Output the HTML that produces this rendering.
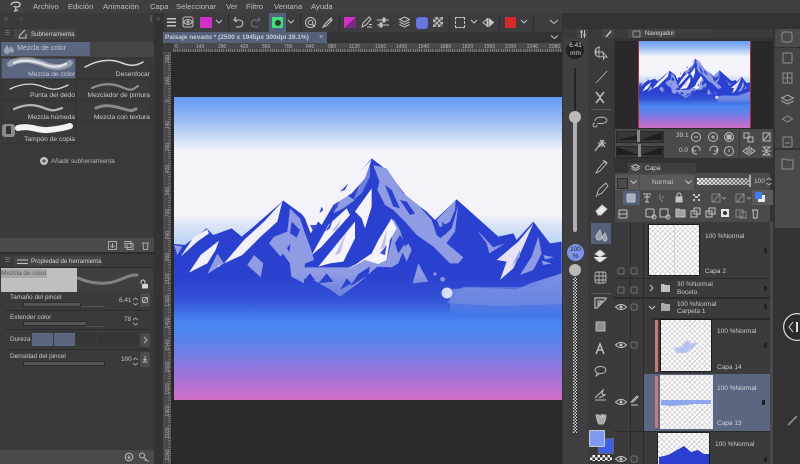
<!DOCTYPE html>
<html><head><meta charset="utf-8"><style>
html,body{margin:0;padding:0;background:#2b292c;width:800px;height:464px;overflow:hidden}
body{position:relative;font-family:"Liberation Sans",sans-serif;color:#c9c8ca;font-size:7.5px}
.a{position:absolute}
.t{position:absolute;white-space:nowrap;line-height:9px}
.m{position:absolute;top:1px;font-size:7.7px;line-height:11px;color:#bdbcbe}
.c{position:absolute;background:#3a393b;box-shadow:inset 0 0 0 .5px #2e2d2f}
.l{position:absolute;white-space:nowrap;line-height:9px;font-size:6.700px;text-align:right;left:0}
.p{font-size:6.400px}
.ch{background-color:#fff;background-image:conic-gradient(#d8d8da 25%,#fff 0 50%,#d8d8da 0 75%,#fff 0);background-size:5px 5px}
.r{position:absolute;font-size:5px;color:#b5b4b6;line-height:6px}
.v{position:absolute;left:164px;font-size:5px;color:#a9a8aa;line-height:6px;transform:rotate(-90deg);transform-origin:center;width:16px;margin-left:-4px;text-align:center}
svg.i{position:absolute;overflow:visible;fill:none;stroke:#c4c3c5;stroke-width:1}
.tr{position:absolute;height:5px;background:#555456;border:.5px solid #2d2c2e;box-sizing:border-box}
.sp{position:absolute;height:1px;background:#2c2b2d}
.b{position:absolute;background:#4c4b4d;border-radius:2px}
.ln{font-size:6.500px}
</style></head><body>
<svg width="0" height="0" style="position:absolute"><defs>
<filter id="soft" x="-2%" y="-2%" width="104%" height="104%"><feGaussianBlur stdDeviation="1.100"/></filter>
<linearGradient id="sky" x1="0" y1="97" x2="0" y2="400" gradientUnits="userSpaceOnUse">
<stop offset="0" stop-color="#639af5"/><stop offset=".07" stop-color="#93b8f5"/><stop offset=".13" stop-color="#c8d9f6"/><stop offset=".165" stop-color="#e5ebf9"/><stop offset=".17" stop-color="#f0f1fb"/><stop offset=".2" stop-color="#f5f4fb"/><stop offset=".39" stop-color="#f4f3fa"/><stop offset=".41" stop-color="#e2e8f8"/><stop offset=".49" stop-color="#b8d0f5"/><stop offset="1" stop-color="#4a80ee"/>
</linearGradient>
<linearGradient id="low" x1="0" y1="300" x2="0" y2="400" gradientUnits="userSpaceOnUse">
<stop offset="0" stop-color="#4379ea"/><stop offset=".28" stop-color="#4c86f1"/><stop offset=".5" stop-color="#6a80e9"/><stop offset=".75" stop-color="#a073d9"/><stop offset="1" stop-color="#d06fc7"/>
</linearGradient>
<linearGradient id="fog" x1="0" y1="274" x2="0" y2="322" gradientUnits="userSpaceOnUse">
<stop offset="0" stop-color="#3a5adb" stop-opacity="0"/><stop offset=".5" stop-color="#3c62dc" stop-opacity=".5"/><stop offset=".85" stop-color="#4379ea" stop-opacity=".95"/><stop offset="1" stop-color="#4983ef"/>
</linearGradient>
<symbol id="art" viewBox="174 97 388 303" preserveAspectRatio="none">
<rect x="174" y="97" width="388" height="303" fill="url(#sky)"/>
<rect x="174" y="300" width="388" height="100" fill="url(#low)"/>
<g transform="translate(170 140) scale(.33333)" filter="url(#soft)">
<path fill="#2a3fcf" d="M12 312L45 315 110 265 130 285 185 265 215 290 245 265 340 182 395 222 405 235 470 190 540 130 605 55 650 90 710 170 770 215 795 240 860 178 985 290 1030 280 1040 300 1090 245 1140 310 1175 305V540H12Z"/>
<g transform="translate(360 30)">
<g fill="#8f9be2">
<path d="M250 45L268 95 262 120 285 165 310 180 345 215 380 255 430 290 480 340 505 340 520 322 440 255 425 210 385 165 340 130 290 55Z"/>
<path d="M310 205L330 240 345 290 325 340 305 352 262 350 205 400 150 440 120 418 70 390 10 382 15 352 100 352 175 352 245 322 290 332 305 270Z"/>
<path d="M0 175L30 205 45 250 62 295 72 330 35 345 0 340 -30 300 -10 260Z"/>
<path d="M385 340L368 400 415 395Z"/><path d="M355 280L335 300 350 335 365 300Z"/>
<path d="M497 150L440 210 450 232 480 215 495 180Z"/><path d="M505 165L485 235 440 275 462 290 495 245Z"/>
<circle cx="435" cy="372" r="5"/><circle cx="458" cy="388" r="7"/>
<path d="M240 45L210 100 190 150 215 130 240 80Z" opacity=".7"/>
<path d="M160 130L195 150 160 175 130 190Z"/>
</g>
<g fill="#2a3fcf">
<path d="M285 105L310 170 330 175 305 120Z"/><path d="M330 150L360 195 375 190 350 155Z"/>
<path d="M5 215L30 240 20 262 0 250Z"/><path d="M10 290L40 300 20 325Z"/><path d="M330 255L345 280 325 310 315 280Z"/>
<path d="M240 350L205 372 180 410 235 375Z"/><path d="M110 370L85 400 130 395Z"/><path d="M455 215L480 235 465 255Z"/>
<path d="M-15 285L5 275 0 310Z"/><path d="M60 370L40 395 75 390Z"/><path d="M170 385L150 420 185 400Z"/>
</g>
<g fill="#f4f2fb">
<path d="M245 28L210 65 150 110 100 150 45 205 62 250 85 215 95 225 130 165 185 130 225 85Z"/>
<path d="M170 175L115 225 65 315 95 290 140 240 180 195Z"/>
<path d="M245 115L195 185 215 205 225 235 245 170Z"/>
<path d="M195 215L150 270 85 350 120 340 160 335 195 265Z"/>
<path d="M305 205L265 270 245 310 175 358 225 330 265 342 290 330 300 270 320 235Z"/>
</g>
<g fill="#3a4dd3">
<path d="M175 100L150 125 165 120Z"/><path d="M95 170L88 190 100 180Z"/><path d="M135 160L125 185 145 170Z"/><path d="M60 225L70 245 78 225Z"/>
<path d="M290 285L270 310 285 315Z"/><path d="M130 205L105 245 120 235Z"/>
</g>
<g fill="#b7b2e4" opacity=".8"><path d="M155 205L125 245 140 240Z"/><path d="M170 245L135 315 150 310Z"/><path d="M290 240L270 300 285 290Z"/></g>
</g>
<g transform="translate(12 180)">
<g fill="#8f9be2">
<path d="M240 165L220 195 260 232 268 190Z"/><path d="M130 160L100 222 150 190Z"/>
<path d="M300 110L285 130 320 170 350 130 340 95Z"/><path d="M350 120L345 170 352 230 390 250 395 140Z"/>
<path d="M0 135L10 165 25 140Z"/>
</g>
<g fill="#f2f0fb">
<path d="M100 88L60 110 20 170 70 125 105 100Z"/>
<path d="M135 122L80 165 45 218 100 190 125 150Z"/>
<path d="M325 5L270 65 210 120 150 190 205 165 260 110 310 65Z"/>
<path d="M130 200l10-8-4 8z"/>
</g>
</g>
<g transform="translate(840 180)">
<g fill="#8f9be2">
<path d="M265 110L245 170 210 225 250 210 275 160Z"/><path d="M80 90L110 130 118 160 165 130 130 142 105 115Z"/>
<path d="M280 165L312 172 285 178ZM275 182L305 190 280 195Z"/>
</g>
<path fill="#e6e2f5" d="M250 70L205 125 140 180 170 185 150 240 190 205 220 140Z"/>
<path fill="#8f9be2" d="M210 150L195 180 185 200 210 170Z"/>
<path fill="#7c92e4" d="M0 268L60 262 200 268 240 250 335 220V340H0Z"/>
</g>
</g>
<rect x="174" y="274" width="388" height="48" fill="url(#fog)"/>
<path fill="#7c92e4" opacity=".55" d="M446 303L463 287 537 287 562 275V304L500 306Z"/>
<circle cx="447" cy="293" r="5.500" fill="#d6ddf9"/>
</symbol>
</defs></svg>

<div class="a" style="left:0;top:0;width:800px;height:13px;background:#413f41"></div>
<div class="a" style="left:0;top:13px;width:800px;height:19px;background:#3b3a3c"></div>
<svg class="i" style="left:9px;top:0" width="14" height="13" viewBox="0 0 14 13"><path d="M2 5c0-3 8-4 9-1 1 3-5 4-6 2M7 8l-1 3 3-1" stroke-width="1.400"/></svg>
<span class="m" style="left:33px">Archivo</span><span class="m" style="left:68px">Edición</span><span class="m" style="left:103px">Animación</span><span class="m" style="left:150px">Capa</span><span class="m" style="left:176px">Seleccionar</span><span class="m" style="left:226px">Ver</span><span class="m" style="left:246px">Filtro</span><span class="m" style="left:274px">Ventana</span><span class="m" style="left:311px">Ayuda</span>

<div class="a" style="left:164px;top:13px;width:398px;height:19px;background:#3d3c3e"></div>
<div class="a" style="left:269px;top:13px;width:17px;height:19px;background:#55607a"></div>
<div class="a" style="left:167px;top:18px;width:9px;height:9px;background:repeating-linear-gradient(#c4c3c5 0 1.400px,transparent 1.400px 3.600px)"></div>
<svg class="i" style="left:182px;top:16px" width="12" height="12"><rect x="1" y="1" width="10" height="10" rx="2"/><ellipse cx="6" cy="6" rx="4" ry="2.400"/><circle cx="6" cy="6" r="1"/><circle cx="10.500" cy="1.500" r="1" fill="#e33" stroke="none"/></svg>
<div class="a" style="left:200px;top:17px;width:12px;height:11px;background:#d030c8"></div>
<svg class="i" style="left:215px;top:19px" width="8" height="6"><path d="M1 1l3 3 3-3"/></svg>
<svg class="i" style="left:233px;top:16px" width="11" height="12"><path d="M3 1L1 4l3 2M1 4h5c5 0 5 7 0 7H3" stroke-width="1.100"/></svg>
<svg class="i" style="left:250px;top:16px;opacity:.4" width="11" height="12"><path d="M8 1l2 3-3 2M10 4H5c-5 0-5 7 0 7h3"/></svg>
<div class="a" style="left:272px;top:17px;width:11px;height:11px;background:#3ee07c;border-radius:1px"></div>
<div class="a" style="left:274.500px;top:19.500px;width:6px;height:6px;background:#2d3a33;border-radius:50%"></div>
<svg class="i" style="left:287px;top:19px" width="8" height="6"><path d="M1 1l3 3 3-3"/></svg>
<svg class="i" style="left:305px;top:17px" width="11" height="11"><circle cx="5.500" cy="5.500" r="5"/><circle cx="5.500" cy="5.500" r="2.200"/><path d="M7 7l3 3"/></svg>
<svg class="i" style="left:322px;top:17px" width="11" height="11"><path d="M9 1L3 7 1 10l3-1 6-6zM7 2l2 2" stroke-width="1.100"/></svg>
<div class="a" style="left:344px;top:17px;width:12px;height:11px;background:linear-gradient(135deg,#d030c8 50%,#7a2a80 50%)"></div>
<svg class="i" style="left:361px;top:16px" width="12" height="12"><path d="M8 1L2 7 1 11l4-2 5-6zM6 11h5M8 8.500h3"/></svg>
<svg class="i" style="left:377px;top:18px" width="12" height="9"><path d="M0 2h12M0 7h12"/><rect x="6" y="0" width="2" height="4" fill="#c4c3c5"/><rect x="3" y="5" width="2" height="4" fill="#c4c3c5"/></svg>
<svg class="i" style="left:399px;top:16px" width="11" height="12"><path d="M5.500 1L10.500 3.500 5.500 6 .5 3.500ZM.5 6l5 2.500L10.500 6M.5 8.500l5 2.500 5-2.500"/></svg>
<div class="a" style="left:416px;top:17px;width:10px;height:10px;border:1.200px solid #5f6ff5;border-radius:3px;background:#6878d8"></div>
<div class="a" style="left:433px;top:17px;width:10px;height:10px;background:conic-gradient(#bbb 25%,#555 0 50%,#bbb 0 75%,#555 0);background-size:5px 5px"></div>
<div class="a" style="left:455px;top:17px;width:8px;height:9px;border:1px dashed #c4c3c5"></div>
<svg class="i" style="left:470px;top:19px" width="8" height="6"><path d="M1 1l3 3 3-3"/></svg>
<svg class="i" style="left:482px;top:18px" width="12" height="9"><path d="M5 1L1 4.500 5 8ZM6 0v9"/><path d="M7.500 1l4 3.500-4 3.500Z" fill="#c4c3c5"/></svg>
<div class="a" style="left:505px;top:17px;width:11px;height:11px;background:#d42a2a"></div>
<svg class="i" style="left:520px;top:19px" width="8" height="6"><path d="M1 1l3 3 3-3"/></svg>
<svg class="i" style="left:549px;top:19px" width="10" height="6"><path d="M1 1l4 3.500L9 1"/></svg>
<div class="a" style="left:228px;top:14px;width:1px;height:17px;background:#2f2e30"></div>
<div class="a" style="left:300px;top:14px;width:1px;height:17px;background:#2f2e30"></div>
<div class="a" style="left:339px;top:14px;width:1px;height:17px;background:#2f2e30"></div>
<div class="a" style="left:449px;top:14px;width:1px;height:17px;background:#2f2e30"></div>
<div class="a" style="left:499px;top:14px;width:1px;height:17px;background:#2f2e30"></div>
<div class="a" style="left:533px;top:14px;width:1px;height:17px;background:#2f2e30"></div>

<div class="a" style="left:0;top:13px;width:154px;height:451px;background:#3a393b"></div>
<div class="a" style="left:154px;top:13px;width:10px;height:451px;background:#333234"></div>
<div class="t" style="left:4px;top:14px;color:#6f6e70;font-size:8px">«</div><div class="t" style="left:20px;top:14px;color:#6f6e70;font-size:8px">‹</div>
<div class="t" style="left:156px;top:14px;color:#6f6e70;font-size:8px">»</div>
<div class="a" style="left:150px;top:15px;width:2px;height:7px;background:#555"></div>
<div class="a" style="left:14px;top:29px;width:62px;height:10px;background:#444345"></div>
<div class="a" style="left:5px;top:30px;width:5px;height:6px;background:repeating-linear-gradient(#666 0 1px,transparent 1px 2px)"></div>
<svg class="i" style="left:18px;top:30px" width="9" height="9"><path d="M7 0L2 5 1 8h7V4"/></svg>
<div class="t" style="left:31px;top:30px;font-size:6.100px;color:#d4d3d5">Subherramienta</div>
<div class="a" style="left:1px;top:42px;width:153px;height:15px;background:#454446"></div>
<div class="a" style="left:1px;top:42px;width:89px;height:14px;background:#5b6680"></div>
<svg class="a" style="left:3px;top:43px" width="12" height="12"><path d="M4 2C2 5 1 6 1 8a3 3 0 006 0C7 6 5 4 4 2ZM8 3c-1 2-2 3-1 5 0 1 1 2 2 2a2.500 2.500 0 002-3C11 6 9 5 8 3Z" fill="#9aa3b8"/></svg>
<div class="t" style="left:17px;top:44px;color:#c4c7d0;font-size:7px">Mezcla de color</div>

<div class="c" style="left:1px;top:58px;width:75px;height:21px;background:#5b6680"></div><div class="c" style="left:76px;top:58px;width:75px;height:21px"></div>
<div class="c" style="left:1px;top:79px;width:75px;height:21px"></div><div class="c" style="left:76px;top:79px;width:75px;height:21px"></div>
<div class="c" style="left:1px;top:101px;width:75px;height:21px"></div><div class="c" style="left:76px;top:101px;width:75px;height:21px"></div>
<div class="c" style="left:1px;top:123px;width:75px;height:21px"></div>
<svg class="a" style="left:0;top:55px" width="154" height="85" fill="none" stroke-linecap="round">
<path d="M10 9C24 1 38 7 46 10S64 13 70 8" stroke="#c9ccd6" stroke-width="6" opacity=".55"/>
<path d="M14 8C24 3 38 7 46 10S60 12 66 9" stroke="#e8e9ee" stroke-width="2.500" opacity=".9"/>
<path d="M85 12C100 4 112 4 122 8S138 10 143 7" stroke="#d8d8da" stroke-width="1.500"/>
<path d="M10 34C22 28 34 28 44 32S60 34 68 30" stroke="#d8d8da" stroke-width="1.300"/>
<path d="M92 33C105 27 115 29 124 33S134 33 138 31" stroke="#8e8d8f" stroke-width="2.200"/>
<path d="M14 54C26 49 34 49 44 53S56 55 62 53" stroke="#b5b4b6" stroke-width="2.300"/>
<path d="M96 53C105 49 114 51 124 54S132 55 136 54" stroke="#8a898b" stroke-width="3"/>
<path d="M18 73C30 70 38 76 48 75S64 73 70 71" stroke="#f2f2f3" stroke-width="6"/>
</svg>
<div class="a" style="left:2px;top:124px;width:13px;height:13px;background:#8c8b8d;border-radius:3px"></div>
<div class="a" style="left:6px;top:126px;width:5px;height:8px;background:#333;border-radius:2px 2px 0 0"></div>
<div class="l" style="width:75px;top:70px;color:#c4c7d0"><span style="background:#5b6680">Mezcla de color</span></div>
<div class="l" style="width:150px;top:70px">Desenfocar</div>
<div class="l" style="width:75px;top:91px">Punta del dedo</div>
<div class="l" style="width:150px;top:91px">Mezclador de pintura</div>
<div class="l" style="width:75px;top:113px">Mezcla húmeda</div>
<div class="l" style="width:150px;top:113px">Mezcla con textura</div>
<div class="l" style="width:75px;top:135px">Tampón de copia</div>
<svg class="i" style="left:40px;top:157px" width="8" height="8"><circle cx="4" cy="4" r="3.500" fill="#c4c3c5"/><path d="M4 2v4M2 4h4" stroke="#3a393b"/></svg>
<div class="t" style="left:51px;top:157px;font-size:6.300px;color:#b5b4b6">Añadir subherramienta</div>
<div class="a" style="left:0;top:238px;width:154px;height:14px;background:#4a494b"></div>
<svg class="i" style="left:108px;top:241px;stroke:#aaa" width="42" height="9"><rect x=".5" y=".5" width="8" height="8"/><path d="M4.500 2v4M2.500 4.500l2 2 2-2"/><rect x="17" y=".5" width="6" height="6"/><rect x="19" y="2.500" width="6" height="6"/><path d="M34 2h7M35 2l.5 6.500h4L40 2"/></svg>
<div class="a" style="left:0;top:252px;width:154px;height:2px;background:#2c2b2d"></div>
<div class="a" style="left:14px;top:256px;width:88px;height:10px;background:#444345"></div>
<div class="a" style="left:5px;top:257px;width:5px;height:6px;background:repeating-linear-gradient(#666 0 1px,transparent 1px 2px)"></div>
<svg class="i" style="left:17px;top:259px" width="11" height="6"><path d="M0 1h11M0 4.500h11"/></svg>
<div class="t" style="left:31px;top:257px;font-size:6.100px;color:#d4d3d5">Propiedad de herramienta</div>
<div class="a" style="left:0;top:267px;width:154px;height:1px;background:#2c2b2d"></div>
<div class="a" style="left:1px;top:268px;width:152px;height:24px;background:#3f3e40"></div>
<div class="a" style="left:1px;top:268px;width:76px;height:24px;background:#c0bfc0"></div>
<svg class="a" style="left:77px;top:268px" width="65" height="24" fill="none"><path d="M1 10C14 16 30 17 42 12S56 7 60 7" stroke="#a09fa1" stroke-width="3" stroke-linecap="round" opacity=".7"/></svg>
<div class="t" style="left:1px;top:269px;color:#5a595b;font-size:6.500px;background:#a8a7a9">Mezcla de color</div>
<svg class="i" style="left:140px;top:280px" width="8" height="9"><rect x="2" y="4" width="6" height="4.500" fill="#d5d4d6" stroke="none"/><path d="M1 4V2a2 2 0 014 0v2" stroke="#d5d4d6"/></svg>
<div class="t p" style="left:10px;top:293px">Tamaño del pincel</div>
<div class="tr" style="left:23px;top:302px;width:58px"></div><div class="sp" style="left:81px;top:306px;width:24px;background:#555456"></div>
<div class="t p" style="left:119px;top:296px">6.41</div>
<svg class="i" style="left:132px;top:297px;stroke:#a09fa1" width="7" height="9"><path d="M1 3l2.500-2L6 3M1 6l2.500 2L6 6"/></svg>
<div class="b" style="left:140px;top:293px;width:10px;height:14px"></div><svg class="i" style="left:142px;top:297px;stroke:#aaa" width="6" height="6"><rect x=".5" y=".5" width="5" height="5" rx="1"/><path d="M1 5l4-4"/></svg>
<div class="sp" style="left:5px;top:310px;width:144px"></div>
<div class="t p" style="left:10px;top:313px">Extender color</div>
<div class="tr" style="left:23px;top:321px;width:64px"></div><div class="sp" style="left:87px;top:326px;width:18px;background:#555456"></div>
<div class="t p" style="left:124px;top:315px">78</div>
<svg class="i" style="left:132px;top:317px;stroke:#a09fa1" width="7" height="9"><path d="M1 3l2.500-2L6 3M1 6l2.500 2L6 6"/></svg>
<div class="sp" style="left:5px;top:329px;width:144px"></div>
<div class="t p" style="left:10px;top:335px">Dureza</div>
<div class="a" style="left:32px;top:333px;width:21px;height:13px;background:#5b6680"></div><div class="a" style="left:54px;top:333px;width:21px;height:13px;background:#5b6680"></div>
<div class="a" style="left:76px;top:333px;width:20px;height:13px;background:#363537"></div><div class="a" style="left:98px;top:333px;width:20px;height:13px;background:#363537"></div><div class="a" style="left:119px;top:333px;width:20px;height:13px;background:#363537"></div>
<div class="b" style="left:140px;top:333px;width:10px;height:14px"></div><svg class="i" style="left:143px;top:336px;stroke:#bbb" width="5" height="8"><path d="M1 1l3 3-3 3"/></svg>
<div class="sp" style="left:5px;top:349px;width:144px"></div>
<div class="t p" style="left:10px;top:352px">Densidad del pincel</div>
<div class="tr" style="left:23px;top:361px;width:82px"></div>
<div class="t p" style="left:121px;top:355px">100</div>
<svg class="i" style="left:132px;top:357px;stroke:#a09fa1" width="7" height="9"><path d="M1 3l2.500-2L6 3M1 6l2.500 2L6 6"/></svg>
<div class="b" style="left:140px;top:352px;width:10px;height:15px"></div><svg class="i" style="left:142px;top:356px;stroke:#bbb" width="6" height="7"><path d="M3 0v4M1.500 3L3 4.500 4.500 3M.5 6h5"/></svg>
<div class="a" style="left:0;top:450px;width:154px;height:14px;background:#4a494b"></div>
<svg class="i" style="left:125px;top:452px;stroke:#bbb" width="26" height="10"><circle cx="4" cy="5" r="3.800"/><path d="M4 3v3M2.500 5L4 6.500 5.500 5"/><circle cx="17" cy="3.500" r="2.500"/><path d="M18.500 5.500l5 4M21 7.500l-1 1.500"/></svg>

<div class="a" style="left:163px;top:32px;width:399px;height:11px;background:#333234"></div>
<div class="a" style="left:163px;top:32px;width:164px;height:11px;background:#55607a"></div>
<div class="t" style="left:165px;top:33px;font-size:6.500px;font-weight:bold;color:#c7cad3">Paisaje nevado * (2500 x 1945px 300dpi 39.1%)</div>
<div class="t" style="left:319px;top:33px;font-size:7px;color:#c7cad3">×</div>
<svg class="i" style="left:550px;top:35px" width="9" height="5"><path d="M1 .5l3.500 3L8 .5"/></svg>
<div class="a" style="left:163px;top:43px;width:399px;height:9px;background:#4a494b"></div>
<div class="a" style="left:173px;top:49px;width:389px;height:3px;background:repeating-linear-gradient(90deg,#9a999b 0 .5px,transparent .5px 2.200px)"></div>
<div class="a" style="left:163px;top:52px;width:8px;height:412px;background:#4a494b"></div>
<div class="a" style="left:163px;top:43px;width:10px;height:9px;background:#3b3a3c"></div>
<div class="a" style="left:168px;top:53px;width:3px;height:411px;background:repeating-linear-gradient(#88878a 0 .5px,transparent .5px 2.200px)"></div>
<div class="r" style="left:175px;top:44px">0</div><div class="r" style="left:196px;top:44px">140</div><div class="r" style="left:218px;top:44px">280</div><div class="r" style="left:240px;top:44px">420</div><div class="r" style="left:262px;top:44px">560</div><div class="r" style="left:284px;top:44px">700</div><div class="r" style="left:306px;top:44px">840</div><div class="r" style="left:328px;top:44px">980</div><div class="r" style="left:349px;top:44px">1120</div><div class="r" style="left:375px;top:44px">1260</div><div class="r" style="left:396px;top:44px">1400</div><div class="r" style="left:418px;top:44px">1540</div><div class="r" style="left:440px;top:44px">1680</div><div class="r" style="left:462px;top:44px">1820</div><div class="r" style="left:484px;top:44px">1960</div><div class="r" style="left:505px;top:44px">2100</div><div class="r" style="left:527px;top:44px">2240</div><div class="r" style="left:549px;top:44px">2380</div>
<div class="v" style="top:56px">280</div><div class="v" style="top:78px">140</div><div class="v" style="top:98px">0</div><div class="v" style="top:122px">140</div><div class="v" style="top:144px">280</div><div class="v" style="top:166px">420</div><div class="v" style="top:188px">560</div><div class="v" style="top:210px">700</div><div class="v" style="top:232px">840</div><div class="v" style="top:254px">980</div><div class="v" style="top:276px">1120</div><div class="v" style="top:298px">1260</div><div class="v" style="top:320px">1400</div><div class="v" style="top:342px">1540</div><div class="v" style="top:364px">1680</div><div class="v" style="top:386px">1820</div><div class="v" style="top:408px">1960</div><div class="v" style="top:430px">2100</div><div class="v" style="top:452px">2240</div>

<svg class="a" style="left:174px;top:97px" width="388" height="303"><use href="#art" width="388" height="303"/></svg>

<div class="a" style="left:562px;top:13px;width:238px;height:451px;background:#333234"></div>
<div class="a" style="left:563px;top:38px;width:25px;height:426px;background:#3f3e40"></div>
<div class="a" style="left:566px;top:41px;width:18px;height:18px;border-radius:50%;background:#222123"></div>
<div class="t" style="left:563px;top:42px;width:25px;text-align:center;font-size:6.500px;line-height:8px;color:#d8d7d9">6.41<br>mm</div>
<div class="a" style="left:574px;top:68px;width:2px;height:50px;background:#242325"></div>
<div class="a" style="left:573px;top:117px;width:4px;height:115px;background:#b0afb1;border-radius:2px"></div>
<div class="a" style="left:569px;top:111px;width:12px;height:12px;border-radius:50%;background:#b9b8ba"></div>
<div class="a" style="left:566.500px;top:244px;width:17px;height:17px;border-radius:50%;background:#7b93ea"></div>
<div class="t" style="left:563px;top:246px;width:25px;text-align:center;font-size:6.500px;line-height:7px;color:#222">100<br>%</div>
<div class="a" style="left:569px;top:264px;width:12px;height:12px;border-radius:50%;background:#b9b8ba"></div>
<div class="a" style="left:573px;top:277px;width:4px;height:156px;background:repeating-conic-gradient(#d8d8d8 0 25%,#222 0 50%) 0 0/3px 3px"></div>
<div class="a" style="left:563px;top:29px;width:25px;height:9px;background:#3a393b"></div>
<div class="a" style="left:577px;top:29px;width:11px;height:9px;background:#444345"></div>
<svg class="i" style="left:580px;top:30px" width="6" height="8"><path d="M1.500 0v8M4.500 0v8M0 2h3M3 5h3"/></svg>

<div class="a" style="left:588px;top:38px;width:26px;height:426px;background:#3a393b"></div>
<div class="a" style="left:588px;top:29px;width:26px;height:9px;background:#3a393b"></div>
<div class="a" style="left:602px;top:29px;width:12px;height:9px;background:#444345"></div>
<svg class="i" style="left:605px;top:31px" width="7" height="7"><path d="M6 0L1 6" stroke-width="1.400"/></svg>
<div class="a" style="left:591px;top:223px;width:20px;height:21px;background:#55607a"></div>
<div class="a" style="left:591px;top:109px;width:20px;height:1px;background:#5a595b"></div>
<div class="a" style="left:591px;top:293px;width:20px;height:1px;background:#5a595b"></div>
<svg class="i" style="left:588px;top:38px;stroke:#bdbcbe;stroke-width:.9" width="26" height="400">
<path d="M12 9a5 5 0 103 9M8 10v8M7 14h8M11 9v10M15 14l4 5-2.500 0-1 2Z"/>
<path d="M8 45L19 33" stroke-width=".7"/>
<path d="M8 54l4 5 4-5M8 65l4-5 4 5" stroke-width="1.600"/>
<path d="M7 83c0-5 11-5 12-1 0 4-8 4-10 3M9 87a2 2 0 11-2-2"/>
<path d="M12 106l-5 7M14 102v7M10 105h8M12 102l5 7M16 102l-5 7" stroke-width="1.100"/>
<path d="M17 123l-7 8-2 4 4-2 7-8zM15 122l4 4"/>
<path d="M18 145l-7 6-2 5 1 1 4-2 6-7zM9 157l-1 2"/>
<path d="M8 173l6-6 5 4-6 6H10z" fill="#e8e7e9"/>
<path d="M12 192c-3 4-4 5-4 7a3 3 0 006 0c0-2-1-3-2-7zM17 195c-2 3-3 4-2 6 0 1 1 2 2 2a2.500 2.500 0 002-3z" fill="#98a0b5"/>
<path d="M7 216l5-4 5 4-5 3z M6 219c2 2 3 4 6 5 3-1 4-3 7-5" fill="#e8e7e9"/>
<rect x="7" y="234" width="11" height="11" rx="2"/><path d="M11 234v11M15 234v11M7 238h11M7 242h11"/>
<path d="M7 260h11v1L9 270H7zM10 263h4l-4 4z" stroke-width="1.200"/>
<path d="M8 284h9v9H8z" fill="#8f8e90"/>
<path d="M8 316l4-10 4 10M9.500 312h5" stroke-width="1.500"/>
<ellipse cx="12.500" cy="332" rx="5.500" ry="3.500"/><path d="M9 335l-1 3 3-2"/>
<path d="M7 362h11M7 360l8-8-1 4 3 1-6 3" stroke-width="1.100"/>
<path d="M8 377c1 4 1 7 3 9h4c2-2 3-5 3-9-1 0-1 2-2 2v-3l-1 3v-3l-1 3-1-3v3l-2-2z" fill="#aaa9ab"/>
</svg>
<div class="a" style="left:598px;top:438px;width:14px;height:14px;background:#3f5fe8;border:1px solid #666"></div>
<div class="a" style="left:589px;top:430px;width:14px;height:15px;background:#7f9af2;border:1.200px solid #c9c8ca;border-radius:1px"></div>
<div class="a" style="left:590px;top:455px;width:22px;height:6px;background:repeating-conic-gradient(#fff 0 25%,#333 0 50%) 0 0/5px 5px;border-radius:1px"></div>

<div class="a" style="left:614px;top:29px;width:159px;height:9px;background:#3a393b"></div>
<div class="a" style="left:628px;top:29px;width:48px;height:9px;background:#444345"></div>
<div class="a" style="left:677px;top:29px;width:35px;height:9px;background:#3e3d3f"></div>
<svg class="i" style="left:632px;top:30px;stroke:#9a999b" width="9" height="8"><rect x="1" y="1" width="7" height="6" rx="1"/></svg>
<div class="t" style="left:645px;top:30px;font-size:6px;color:#d4d3d5">Navegador</div>
<div class="a" style="left:615px;top:41px;width:158px;height:88px;background:#2a282b"></div>
<svg class="a" style="left:638px;top:41px" width="112" height="87"><use href="#art" width="112" height="87"/></svg>
<div class="a" style="left:637.500px;top:41px;width:.6px;height:87px;background:#a33"></div><div class="a" style="left:750px;top:41px;width:.6px;height:87px;background:#a33"></div>
<div class="a" style="left:615px;top:129px;width:158px;height:29px;background:#4a494b"></div>
<div class="a" style="left:616px;top:131px;width:46px;height:10px;background:#373638;border:.5px solid #2a292b"></div>
<div class="a" style="left:616px;top:146px;width:46px;height:10px;background:#373638;border:.5px solid #2a292b"></div>
<svg class="a" style="left:616px;top:131px" width="46" height="25"><path d="M1 9L22 4V9ZM46 1V9H24Z M1 24V16L12 20 22 24Z M46 24V16L24 24Z" fill="#1f1e20"/></svg>
<div class="a" style="left:636.500px;top:130px;width:3px;height:12px;background:#88878a"></div><div class="a" style="left:637.500px;top:144px;width:3px;height:13px;background:#88878a"></div>
<div class="t" style="left:676px;top:131px;font-size:6.500px">39.1</div><div class="t" style="left:679px;top:146px;font-size:6.500px">0.0</div>
<svg class="i" style="left:691px;top:132px;stroke:#bbb" width="78" height="24">
<circle cx="5" cy="5" r="4.500"/><path d="M3 5h4"/><circle cx="22" cy="5" r="4.500"/><path d="M20 5h4M22 3v4"/><circle cx="38" cy="5" r="4.500"/><rect x="36" y="3" width="4" height="4" fill="#bbb"/>
<rect x="53" y="1" width="5" height="5"/><rect x="57" y="5" width="5" height="5"/><rect x="72" y="1" width="7" height="8"/><path d="M73 8l5-6"/>
<path d="M9 19a4 4 0 10-3 3M2 16l0 3 3 0"/><path d="M19 19a4 4 0 113 3M26 16v3h-3"/><circle cx="38" cy="19" r="4.500"/><path d="M38 17v3"/>
<path d="M56 16l-4 3 4 3zM58 14v10M60 16l4 3-4 3z"/><path d="M72 15h7l-3.500 3zM72 23h7l-3.500-3zM71 19h9"/>
</svg>
<div class="a" style="left:739px;top:131px;width:1px;height:26px;background:#333234"></div>

<div class="a" style="left:614px;top:158px;width:159px;height:15px;background:#333234"></div>
<div class="a" style="left:628px;top:163px;width:34px;height:10px;background:#444345"></div><div class="a" style="left:662px;top:163px;width:34px;height:10px;background:#3e3d3f"></div>
<svg class="i" style="left:631px;top:164px;stroke:#bbb" width="9" height="8"><path d="M4.500 .5L8.500 2.500 4.500 4.500 .5 2.500ZM.5 4.500l4 2 4-2"/></svg>
<div class="t" style="left:645px;top:164px;font-size:6.500px;color:#d4d3d5">Capa</div>
<div class="a" style="left:615px;top:173px;width:155px;height:49px;background:#4a494b"></div>
<div class="a" style="left:615px;top:175px;width:24px;height:15px;background:#5a595b"></div>
<div class="a" style="left:617px;top:178px;width:9px;height:9px;border:1px solid #2e2d2f;background:#4a494b"></div>
<svg class="i" style="left:630px;top:180px" width="7" height="5"><path d="M.5 .5L3.500 3.500 6.500 .5"/></svg>
<div class="a" style="left:640px;top:175px;width:54px;height:15px;background:#5a595b"></div>
<div class="t" style="left:652px;top:178px;font-size:6.500px">Normal</div>
<svg class="i" style="left:685px;top:180px" width="7" height="5"><path d="M.5 .5L3.500 3.500 6.500 .5"/></svg>
<div class="a" style="left:697px;top:178px;width:54px;height:7px;background:linear-gradient(90deg,rgba(255,255,255,.95),#bdbcbe),repeating-conic-gradient(#888 0 25%,#eee 0 50%) 0 0/4px 4px;background-blend-mode:multiply"></div>
<div class="a" style="left:749px;top:175px;width:2px;height:12px;background:#aaa"></div>
<div class="t" style="left:754px;top:177px;font-size:6.500px">100</div>
<svg class="i" style="left:766px;top:177px;stroke:#aaa" width="6" height="9"><path d="M.5 3L3 1l2.500 2M.5 6L3 8l2.500-2"/></svg>
<div class="a" style="left:623px;top:191px;width:17px;height:14px;background:#55607a"></div>
<svg class="i" style="left:618px;top:191px;stroke:#c4c3c5" width="152" height="30">
<rect x="9" y="3" width="8" height="8" rx="1" fill="#a8adc0"/><path d="M25 3h8M29 3v8M26 6h6M27 11h4"/><path d="M42 3v5l3 3M46 5l-2 2" opacity=".5"/><rect x="58" y="6" width="6" height="5" fill="#c4c3c5"/><path d="M59 6V4a2 2 0 014 0v2"/><path d="M75 4h2M80 4h2M75 9h2M80 9h2M77 6h3" stroke-width="2"/>
<rect x="94" y="3" width="8" height="8" opacity=".5"/><path d="M95 11l7-8" opacity=".5"/><path d="M104 6l2 2 2-2" opacity=".6"/><rect x="118" y="3" width="8" height="8" opacity=".5"/><path d="M119 11l7-8" opacity=".5"/><path d="M129 6l2 2 2-2" opacity=".6"/>
<rect x="1" y="19" width="8" height="8" rx="1"/><path d="M1 23h8"/><rect x="28" y="18" width="8" height="8" rx="1"/><circle cx="36" cy="26" r="2"/><rect x="42" y="18" width="8" height="8"/><circle cx="50" cy="26" r="2"/><path d="M58 18h3l1 1h5v7h-9z" fill="#a09fa1"/><rect x="73" y="20" width="6" height="6"/><rect x="76" y="17" width="6" height="6"/><rect x="88" y="20" width="6" height="6"/><rect x="91" y="17" width="6" height="6"/><rect x="103" y="18" width="8" height="8" fill="#e6e5e7" stroke="none"/><circle cx="107" cy="22" r="2" fill="#333" stroke="none"/><rect x="118" y="19" width="7" height="7" opacity=".5"/><rect x="122" y="21" width="6" height="6" opacity=".5"/><path d="M134 19h6M135 19l.5 8h3.500l.5-8"/>
</svg>
<div class="a" style="left:752px;top:190px;width:21px;height:15px;background:#5a595b"></div>
<div class="a" style="left:758px;top:195px;width:7px;height:7px;background:#e8e7e9"></div><div class="a" style="left:755px;top:192px;width:7px;height:7px;background:#3f7df0"></div>

<div class="a" style="left:614px;top:222px;width:156px;height:242px;background:#3b3a3c"></div>
<div class="a" style="left:629.500px;top:222px;width:1px;height:242px;background:#2b2a2c"></div>
<div class="a" style="left:643px;top:222px;width:1px;height:242px;background:#2b2a2c"></div>
<div class="a" style="left:770px;top:222px;width:3px;height:242px;background:#4a494b"></div>
<div class="a" style="left:614px;top:278px;width:156px;height:1px;background:#2b2a2c"></div>
<div class="a" style="left:614px;top:297px;width:156px;height:1.500px;background:#2b2a2c"></div>
<div class="a" style="left:652px;top:318px;width:118px;height:1.500px;background:#2b2a2c"></div>
<div class="a" style="left:644px;top:374px;width:126px;height:57px;background:#5b6680"></div>
<div class="a" style="left:614px;top:430.500px;width:156px;height:1px;background:#2b2a2c"></div>

<div class="a ch" style="left:649px;top:225px;width:50px;height:50px;box-shadow:0 0 0 .7px #111"></div>
<div class="a" style="left:674px;top:225px;width:.7px;height:50px;background:#e4c8cf"></div>
<div class="t ln" style="left:705px;top:232px">100 %Normal</div><div class="t ln" style="left:705px;top:267px">Capa 2</div>
<div class="t ln" style="left:677px;top:280px">30 %Normal</div><div class="t ln" style="left:677px;top:288px">Boceto</div>
<div class="t ln" style="left:677px;top:300px">100 %Normal</div><div class="t ln" style="left:677px;top:307px">Carpeta 1</div>

<svg class="i" style="left:614px;top:222px;stroke:#6f6e70" width="156" height="240">
<rect x="4" y="46" width="6" height="6" rx="1"/><rect x="17" y="46" width="6" height="6" rx="1"/>
<rect x="4" y="65" width="6" height="6" rx="1"/><rect x="17" y="65" width="6" height="6" rx="1"/>
<path d="M36 63l3 3-3 3" stroke="#c4c3c5"/><path d="M47 62h3l1 1h5v7h-9z" fill="#c0bfc1" stroke="none"/>
<path d="M1.500 85q5.500-5 11 0q-5.500 5-11 0z" stroke="#c4c3c5"/><circle cx="7" cy="85" r="1.500" fill="#c4c3c5" stroke="none"/><rect x="17" y="82" width="6" height="6" rx="1"/>
<path d="M35 84l3 3 3-3" stroke="#c4c3c5"/><path d="M47 81h3l1 1h5v7h-9z" fill="#aaa" stroke="none"/>
<path d="M1.500 123q5.500-5 11 0q-5.500 5-11 0z" stroke="#c4c3c5"/><circle cx="7" cy="123" r="1.500" fill="#c4c3c5" stroke="none"/><rect x="17" y="120" width="6" height="6" rx="1"/>
<path d="M1.500 180q5.500-5 11 0q-5.500 5-11 0z" stroke="#c4c3c5"/><circle cx="7" cy="180" r="1.500" fill="#c4c3c5" stroke="none"/>
<path d="M18 179l5-5 1 1-5 5-2 0zM17 183h7" stroke="#c4c3c5"/>
<path d="M1.500 237q5.500-5 11 0q-5.500 5-11 0z" stroke="#c4c3c5"/><circle cx="7" cy="237" r="1.500" fill="#c4c3c5" stroke="none"/><rect x="17" y="234" width="6" height="6" rx="1"/>
</svg>
<div class="a" style="left:764px;top:248px;width:3px;height:5px;background:#222"></div><div class="a" style="left:764px;top:286px;width:3px;height:5px;background:#222"></div><div class="a" style="left:764px;top:304px;width:3px;height:5px;background:#222"></div><div class="a" style="left:764px;top:343px;width:3px;height:5px;background:#222"></div><div class="a" style="left:762px;top:400px;width:3px;height:5px;background:#222"></div><div class="a" style="left:764px;top:457px;width:3px;height:5px;background:#222"></div>

<div class="a" style="left:655px;top:320px;width:2.500px;height:52px;background:#c87878"></div>
<div class="a ch" style="left:661px;top:320px;width:50px;height:51px;box-shadow:0 0 0 .7px #111"></div>
<svg class="a" style="left:661px;top:320px" width="50" height="51"><path d="M13 28L20 27 26 20 30 24 37 22 32 28 25 33 16 33Z" fill="#a9b8f0" opacity=".8"/></svg>
<div class="t ln" style="left:717px;top:327px">100 %Normal</div><div class="t ln" style="left:717px;top:363px">Capa 14</div>
<div class="a" style="left:655px;top:376px;width:2.500px;height:52px;background:#c87878"></div>
<div class="a ch" style="left:660.500px;top:376px;width:51px;height:52px;box-shadow:0 0 0 1px #e8e8ea"></div>
<svg class="a" style="left:660px;top:376px" width="52" height="52"><path d="M1 24h50v4H34l-8 1-16 1-9-1z" fill="#8fa5ee"/></svg>
<div class="t ln" style="left:717px;top:384px;color:#d5d7de">100 %Normal</div><div class="t ln" style="left:717px;top:419px;color:#d5d7de">Capa 13</div>
<div class="a ch" style="left:658px;top:433px;width:51px;height:31px;box-shadow:0 0 0 .7px #111"></div>
<svg class="a" style="left:658px;top:433px" width="51" height="31"><path d="M1 24L10 22 19 17 26 13 33 19 40 17 46 21 51 21V31H1Z" fill="#2a3fcf"/></svg>
<div class="t ln" style="left:715px;top:440px">100 %Normal</div>

<div class="a" style="left:775px;top:29px;width:25px;height:18px;background:#4a494b;border-radius:2px"></div>
<div class="a" style="left:775px;top:48px;width:25px;height:42px;background:#444345;border-radius:2px"></div>
<div class="a" style="left:775px;top:90px;width:25px;height:58px;background:#444345;border-radius:2px"></div>
<div class="a" style="left:775px;top:150px;width:25px;height:78px;background:#4a494b;border-radius:2px"></div>
<svg class="i" style="left:775px;top:29px;stroke:#8f8e90" width="25" height="150">
<rect x="7" y="3" width="10" height="10" rx="2"/><rect x="8" y="24" width="9" height="10" rx="1"/><rect x="8" y="44" width="9" height="10"/><path d="M8 49h9M12.500 44v10"/>
<path d="M12.500 66l6 3-6 3-6-3zM6.500 72l6 3 6-3" stroke="#aaa"/><path d="M12.500 87l5 3-5 3-5-3z"/><rect x="8" y="108" width="9" height="10" rx="1"/><path d="M10 114h5"/>
<path d="M7 130h4l1 1h6v9H7z"/>
</svg>

<div class="a" style="left:783px;top:313px;width:28px;height:28px;border-radius:50%;background:#2b2a2c;box-shadow:inset 0 0 0 1.200px #ddd"></div>
<svg class="i" style="left:788px;top:321px;stroke:#ddd" width="12" height="12"><path d="M5 1L1 6l4 5"/><path d="M9 1v10" stroke-width="2"/></svg>
<div class="a" style="left:781px;top:410px;width:22px;height:22px;border-radius:50%;background:#333234"></div>
<svg class="i" style="left:787px;top:415px;stroke:#8a898b;stroke-width:1.800" width="11" height="11"><path d="M10 1L2 9 1 10"/></svg>
</body></html>
